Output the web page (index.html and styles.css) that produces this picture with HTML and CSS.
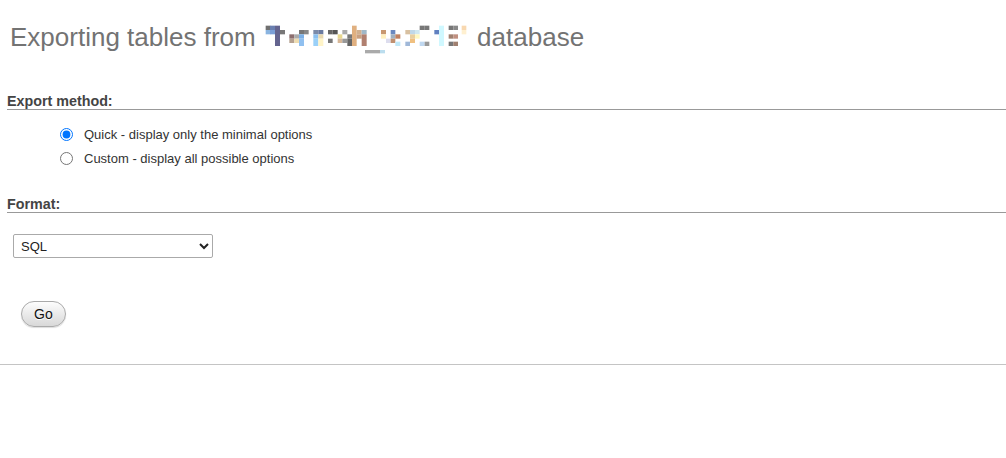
FILE: index.html
```html
<!DOCTYPE html>
<html lang="en">
<head>
<meta charset="utf-8">
<title>Export</title>
<link rel="stylesheet" href="styles.css">
</head>
<body class="page">
<h2 class="title">Exporting tables from <svg class="masked" width="207" height="31" viewBox="9 12 621 93" aria-hidden="true">
<rect x="17" y="17" width="14" height="13" fill="#707070"/>
<rect x="17" y="30" width="14" height="13" fill="#8ab4e0"/>
<rect x="30" y="17" width="15" height="13" fill="#6a7fb0"/>
<rect x="30" y="30" width="15" height="13" fill="#7a9fd8"/>
<rect x="45" y="17" width="15" height="61" fill="#64648f"/>
<rect x="60" y="30" width="15" height="13" fill="#777"/>
<rect x="88" y="43" width="15" height="13" fill="#8c6e6e"/>
<rect x="88" y="56" width="15" height="13" fill="#b4a090"/>
<rect x="103" y="43" width="14" height="13" fill="#aaa"/>
<rect x="103" y="56" width="14" height="13" fill="#eedcb0"/>
<rect x="117" y="30" width="15" height="13" fill="#777"/>
<rect x="117" y="43" width="15" height="13" fill="#7ab0e8"/>
<rect x="117" y="56" width="15" height="22" fill="#90c0f0"/>
<rect x="132" y="30" width="14" height="13" fill="#888"/>
<rect x="160" y="30" width="15" height="13" fill="#7a8aa8"/>
<rect x="160" y="43" width="15" height="13" fill="#8ac0f0"/>
<rect x="160" y="56" width="15" height="22" fill="#9ad0f8"/>
<rect x="175" y="30" width="15" height="13" fill="#6a7aa0"/>
<rect x="175" y="43" width="15" height="13" fill="#e8d8b0"/>
<rect x="175" y="56" width="15" height="22" fill="#fff4c8"/>
<rect x="204" y="30" width="14" height="13" fill="#666"/>
<rect x="204" y="56" width="14" height="13" fill="#777"/>
<rect x="218" y="30" width="15" height="13" fill="#555"/>
<rect x="233" y="43" width="14" height="13" fill="#e8d890"/>
<rect x="233" y="56" width="14" height="13" fill="#d8b898"/>
<rect x="247" y="30" width="15" height="13" fill="#aaa"/>
<rect x="247" y="56" width="15" height="13" fill="#999"/>
<rect x="262" y="43" width="14" height="13" fill="#777"/>
<rect x="262" y="56" width="14" height="22" fill="#666"/>
<rect x="276" y="17" width="14" height="61" fill="#e0b080"/>
<rect x="290" y="30" width="15" height="13" fill="#d0b090"/>
<rect x="290" y="43" width="15" height="13" fill="#c8a080"/>
<rect x="305" y="30" width="15" height="13" fill="#a0b8c8"/>
<rect x="305" y="43" width="15" height="35" fill="#b08070"/>
<rect x="315" y="90" width="45" height="10" fill="#aaa"/>
<rect x="360" y="90" width="15" height="10" fill="#bde"/>
<rect x="363" y="30" width="15" height="13" fill="#c89870"/>
<rect x="363" y="43" width="15" height="13" fill="#fff0c0"/>
<rect x="378" y="56" width="14" height="13" fill="#dde"/>
<rect x="392" y="30" width="14" height="13" fill="#6a88c0"/>
<rect x="392" y="43" width="14" height="13" fill="#a0b0c0"/>
<rect x="392" y="56" width="14" height="13" fill="#c09070"/>
<rect x="406" y="43" width="15" height="13" fill="#c08060"/>
<rect x="406" y="65" width="15" height="13" fill="#c0e8f8"/>
<rect x="436" y="30" width="14" height="13" fill="#d8c0a0"/>
<rect x="436" y="65" width="14" height="13" fill="#a0b8d8"/>
<rect x="450" y="30" width="15" height="13" fill="#c0d8e8"/>
<rect x="450" y="43" width="15" height="13" fill="#e8d0a0"/>
<rect x="450" y="56" width="15" height="13" fill="#f0c080"/>
<rect x="465" y="30" width="14" height="13" fill="#d0e8f0"/>
<rect x="465" y="43" width="14" height="13" fill="#fff8c0"/>
<rect x="479" y="17" width="15" height="13" fill="#777"/>
<rect x="479" y="65" width="15" height="13" fill="#c0d8f0"/>
<rect x="494" y="17" width="14" height="13" fill="#777"/>
<rect x="494" y="65" width="14" height="13" fill="#999"/>
<rect x="523" y="30" width="14" height="13" fill="#6080c0"/>
<rect x="537" y="17" width="15" height="61" fill="#d0f8ff"/>
<rect x="566" y="17" width="14" height="13" fill="#777"/>
<rect x="566" y="43" width="14" height="13" fill="#a08070"/>
<rect x="566" y="65" width="14" height="13" fill="#777"/>
<rect x="580" y="17" width="14" height="13" fill="#888"/>
<rect x="580" y="43" width="14" height="13" fill="#c09080"/>
<rect x="580" y="65" width="14" height="13" fill="#a08070"/>
<rect x="605" y="17" width="14" height="13" fill="#f8d8b0"/>
<rect x="605" y="30" width="14" height="13" fill="#fff0d0"/>
</svg> database</h2>

<form class="export">
  <section class="section">
    <h3 class="section-title">Export method:</h3>
    <ul class="options">
      <li class="option"><input class="radio" type="radio" name="method" id="quick" checked><label for="quick">Quick - display only the minimal options</label></li>
      <li class="option"><input class="radio" type="radio" name="method" id="custom"><label for="custom">Custom - display all possible options</label></li>
    </ul>
  </section>

  <section class="section section-format">
    <h3 class="section-title">Format:</h3>
    <div class="format-row">
      <select class="select" name="format">
        <option>SQL</option>
      </select>
    </div>
  </section>

  <div class="actions">
    <button class="btn" type="button">Go</button>
  </div>
</form>
<hr class="rule">
</body>
</html>
```

FILE: styles.css
```css
* { box-sizing: border-box; }

.page {
  margin: 0;
  background: #fff;
  font-family: "Liberation Sans", Arial, sans-serif;
  color: #333;
}

.title {
  margin: 22px 0 0 10px;
  font-size: 26px;
  line-height: 30px;
  font-weight: normal;
  color: #737373;
  white-space: nowrap;
}

.masked {
  vertical-align: -9px;
}

.export {
  margin: 38px 0 0 7px;
}

.section-title {
  margin: 0;
  font-size: 14.3px;
  line-height: 16px;
  font-weight: bold;
  color: #444;
  border-bottom: 1px solid #999;
}

.options {
  list-style: none;
  margin: 12px 0 0;
  padding: 0;
}

.option {
  display: flex;
  align-items: center;
  height: 24px;
  font-size: 13px;
  color: #333;
}

.radio {
  width: 13px;
  height: 13px;
  margin: 0 11px 0 53px;
}

.section-format {
  margin-top: 26px;
}

.format-row {
  margin-top: 21px;
  padding-left: 6px;
}

.select {
  width: 200px;
  height: 24px;
  font-family: "Liberation Sans", Arial, sans-serif;
  font-size: 13px;
  color: #222;
  background: #fff;
  border: 1px solid #aaa;
  border-radius: 2px;
  padding: 0 3px;
}

.actions {
  margin-top: 43px;
  padding-left: 14px;
}

.btn {
  height: 26px;
  padding: 0 12px;
  font-family: "Liberation Sans", Arial, sans-serif;
  font-size: 14px;
  color: #111;
  border: 1px solid #aaa;
  border-radius: 13px;
  background: linear-gradient(#fdfdfd, #d8d8d8);
  text-shadow: 0 1px 0 #fff;
  box-shadow: 0 1px 1px #ddd;
}

.rule {
  margin: 37px 0 0;
  border: 0;
  border-top: 1px solid #c4c4c4;
  height: 0;
}
```
